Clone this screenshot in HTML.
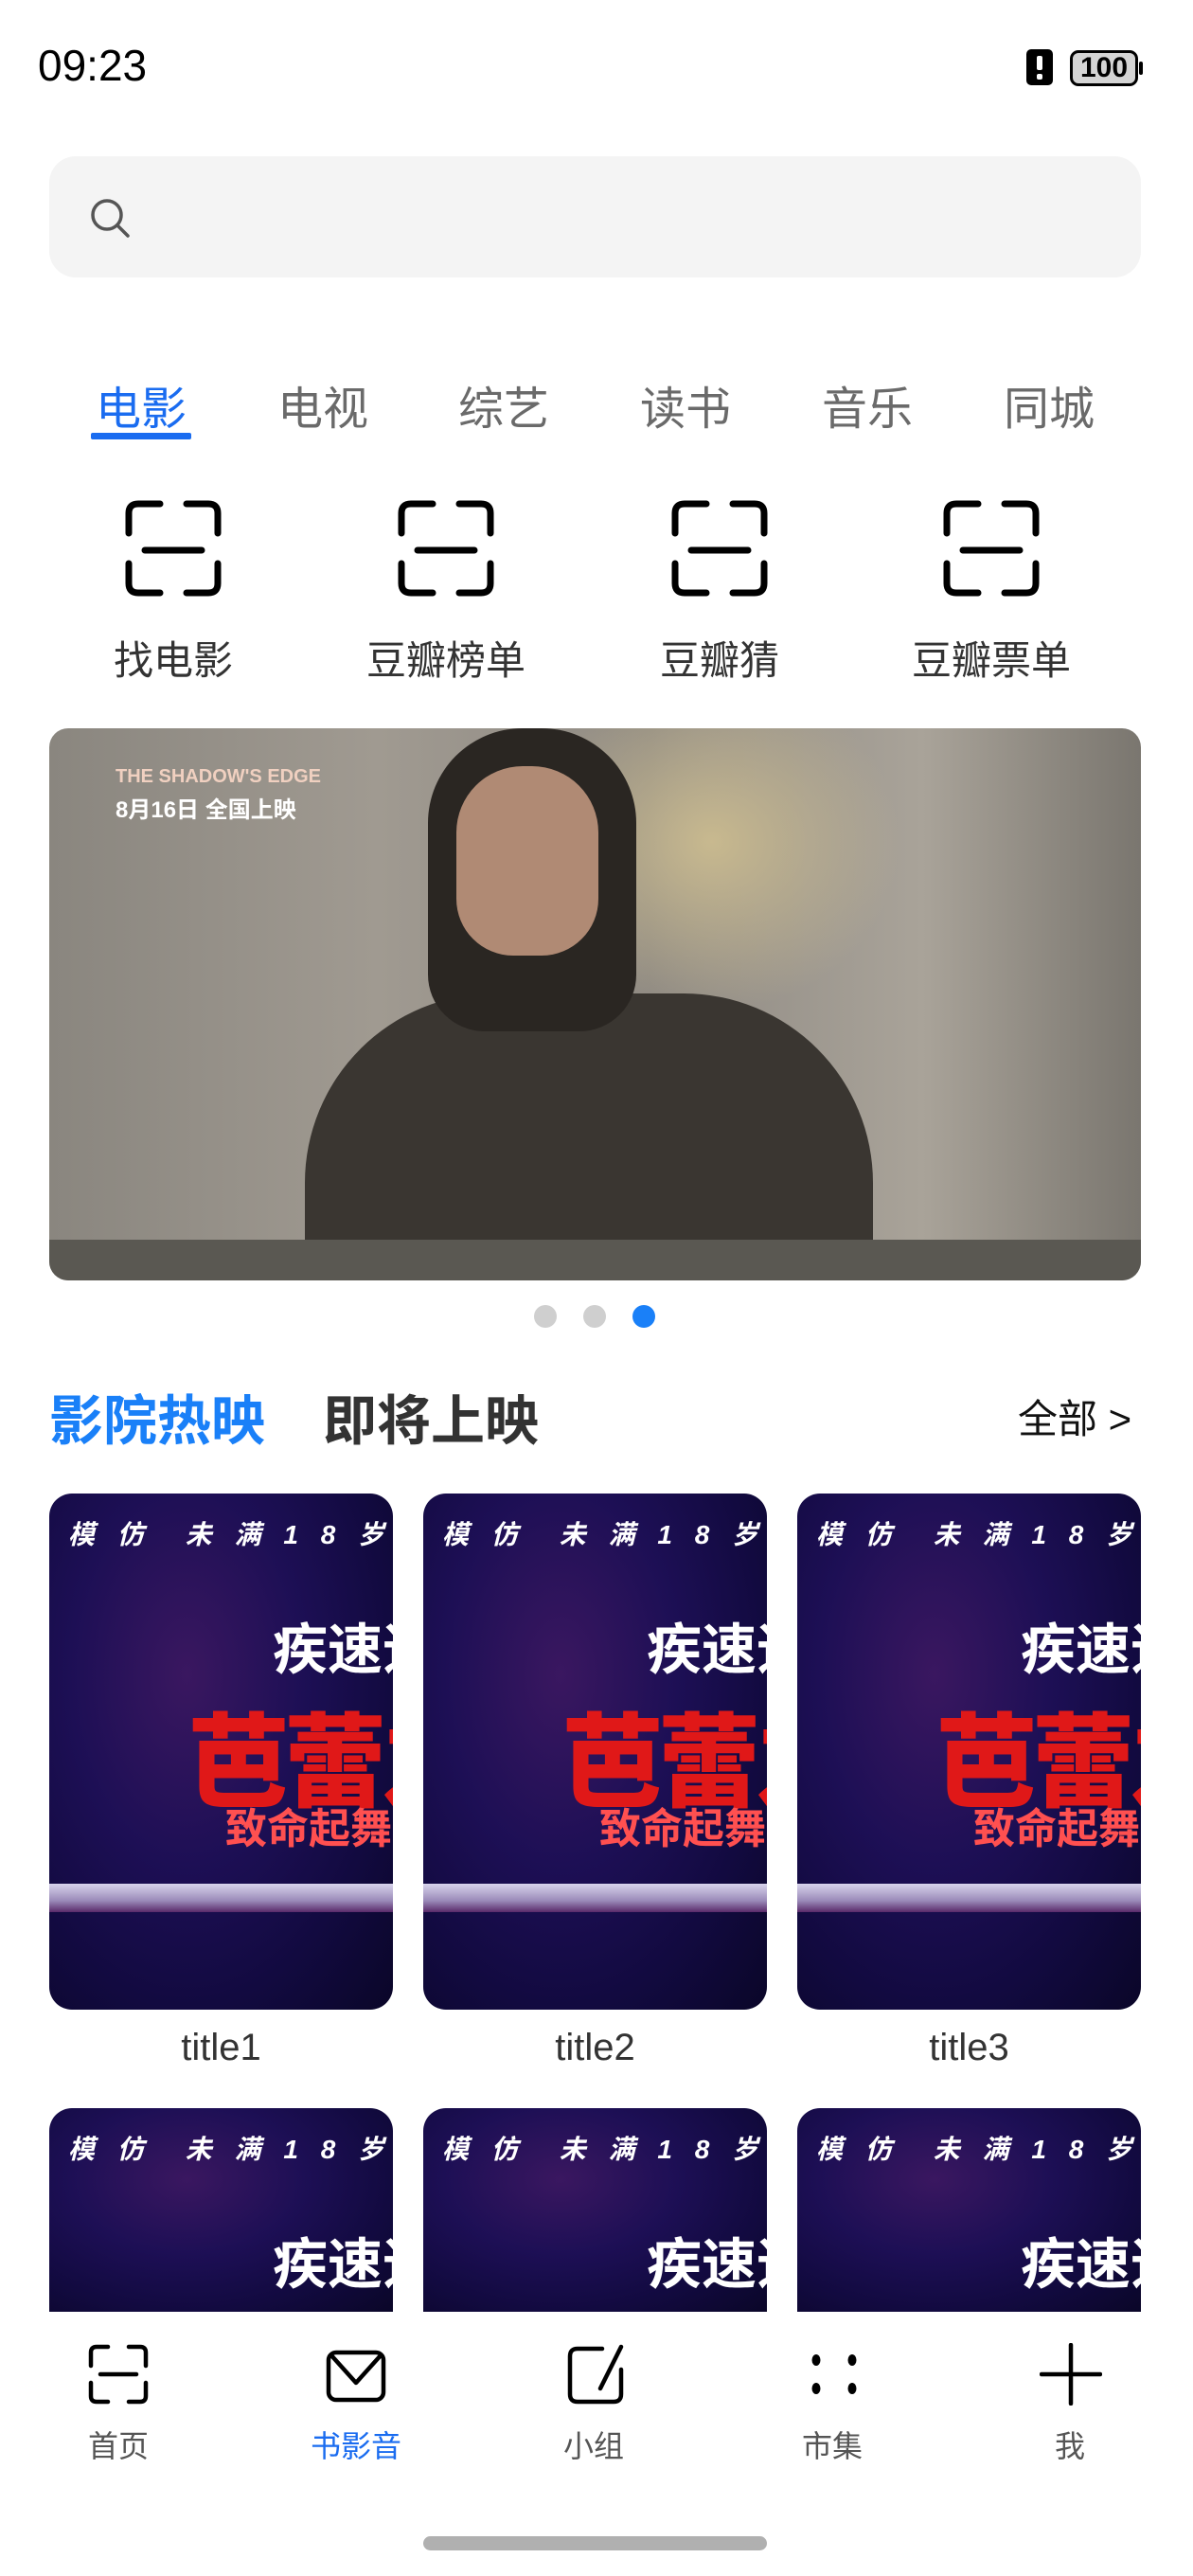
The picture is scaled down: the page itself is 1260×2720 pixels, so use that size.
<!DOCTYPE html>
<html style="overflow:hidden;height:2720px"><head><meta charset="utf-8">
<style>
*{margin:0;padding:0;box-sizing:border-box}
html,body{width:1260px;height:2720px;overflow:hidden}
body{background:#fff;position:relative;font-family:"Liberation Sans","Noto Sans CJK SC",sans-serif;color:#222}
.abs{position:absolute}
.time{left:40px;top:42px;font-size:46px;font-weight:500;color:#000}
.search{left:52px;top:165px;width:1153px;height:128px;background:#f4f4f4;border-radius:28px}
.tab{top:392px;font-size:48px;color:#6a6a6a;width:140px;text-align:center}
.ic{top:527px;width:104px;height:104px}
.lbl{top:664px;font-size:42px;color:#333;width:260px;text-align:center}
.banner{left:52px;top:769px;width:1153px;height:583px;border-radius:20px;overflow:hidden;background:linear-gradient(90deg,#8a867f 0%,#a09a91 30%,#8f8a83 55%,#a9a399 80%,#7a766f 100%)}
.dot{top:1378px;width:24px;height:24px;border-radius:50%;background:#cfcfcf}
.poster{width:363px;height:545px;border-radius:24px;overflow:hidden;background:radial-gradient(ellipse at 40% 35%,#3a1760 0%,#1d0f55 40%,#120a40 70%,#0a0628 100%)}
.poster .t1{position:absolute;left:20px;top:22px;color:#fff;font-weight:bold;font-style:italic;font-size:28px;letter-spacing:8px;white-space:nowrap}
.poster .t2{position:absolute;left:236px;top:118px;color:#fff;font-weight:bold;font-size:58px;white-space:nowrap}
.poster .t3{position:absolute;left:146px;top:198px;color:#e01818;font-weight:900;font-size:108px;white-space:nowrap;letter-spacing:-6px}
.poster .t4{position:absolute;left:186px;top:318px;color:#ff5050;font-weight:bold;font-size:44px;white-space:nowrap}
.poster .bar{position:absolute;left:0;top:412px;width:100%;height:30px;background:linear-gradient(180deg,#d8d4ec,#9a8ab8 60%,#5a2a6a)}
.short{height:215px;border-radius:24px 24px 0 0}
.ptitle{top:2140px;width:363px;text-align:center;font-size:40px;color:#333}
.nav{left:0;top:2441px;width:1260px;height:279px;background:#fff}
.nl{top:2558px;font-size:32px;color:#555;width:200px;text-align:center}
</style></head><body>
<div class="abs time">09:23</div>
<svg class="abs" style="left:1084px;top:52px" width="28" height="38" viewBox="0 0 28 38"><rect x="0" y="0" width="28" height="38" rx="5" fill="#000"/><rect x="11" y="7" width="6" height="15" rx="2" fill="#fff"/><rect x="11" y="26" width="6" height="6" rx="2" fill="#fff"/></svg>
<div class="abs" style="left:1130px;top:53px;width:72px;height:38px;border:3px solid #000;border-radius:9px;background:#d4d4d4;font-size:30px;font-weight:bold;line-height:32px;text-align:center;color:#000">100</div>
<div class="abs" style="left:1203px;top:65px;width:4px;height:14px;background:#000;border-radius:2px"></div>

<div class="abs search"></div>
<svg class="abs" style="left:92px;top:206px" width="48" height="48" viewBox="0 0 48 48"><circle cx="21" cy="21" r="15" fill="none" stroke="#555" stroke-width="3.5"/><line x1="32" y1="32" x2="43" y2="43" stroke="#555" stroke-width="3.5" stroke-linecap="round"/></svg>

<div class="abs tab" style="left:79px;color:#1a6cf0">电影</div>
<div class="abs" style="left:96px;top:457px;width:106px;height:7px;background:#1a6cf0;border-radius:2px"></div>
<div class="abs tab" style="left:271px">电视</div>
<div class="abs tab" style="left:462px">综艺</div>
<div class="abs tab" style="left:654px">读书</div>
<div class="abs tab" style="left:846px">音乐</div>
<div class="abs tab" style="left:1038px">同城</div>

<svg class="abs ic" style="left:131px" viewBox="0 0 104 104"><g fill="none" stroke="#000" stroke-width="7" stroke-linecap="round"><path d="M5 36V15Q5 5 15 5H38M66 5H89Q99 5 99 15V36M5 68V89Q5 99 15 99H38M66 99H89Q99 99 99 89V68M22 54H82"/></g></svg>
<svg class="abs ic" style="left:419px" viewBox="0 0 104 104"><g fill="none" stroke="#000" stroke-width="7" stroke-linecap="round"><path d="M5 36V15Q5 5 15 5H38M66 5H89Q99 5 99 15V36M5 68V89Q5 99 15 99H38M66 99H89Q99 99 99 89V68M22 54H82"/></g></svg>
<svg class="abs ic" style="left:708px" viewBox="0 0 104 104"><g fill="none" stroke="#000" stroke-width="7" stroke-linecap="round"><path d="M5 36V15Q5 5 15 5H38M66 5H89Q99 5 99 15V36M5 68V89Q5 99 15 99H38M66 99H89Q99 99 99 89V68M22 54H82"/></g></svg>
<svg class="abs ic" style="left:995px" viewBox="0 0 104 104"><g fill="none" stroke="#000" stroke-width="7" stroke-linecap="round"><path d="M5 36V15Q5 5 15 5H38M66 5H89Q99 5 99 15V36M5 68V89Q5 99 15 99H38M66 99H89Q99 99 99 89V68M22 54H82"/></g></svg>
<div class="abs lbl" style="left:53px">找电影</div>
<div class="abs lbl" style="left:341px">豆瓣榜单</div>
<div class="abs lbl" style="left:630px">豆瓣猜</div>
<div class="abs lbl" style="left:917px">豆瓣票单</div>

<div class="abs banner">
<div class="abs" style="left:500px;top:0;width:400px;height:300px;background:radial-gradient(ellipse at 50% 40%,#c8b98f 0%,rgba(180,170,140,0) 70%)"></div>
<div class="abs" style="left:270px;top:280px;width:600px;height:320px;background:#3a3631;border-radius:200px 200px 0 0"></div>
<div class="abs" style="left:400px;top:0;width:220px;height:320px;background:#2a2622;border-radius:100px 100px 60px 60px"></div>
<div class="abs" style="left:430px;top:40px;width:150px;height:200px;background:#b08a74;border-radius:70px 70px 60px 60px"></div>
<div class="abs" style="left:0;top:540px;width:1153px;height:43px;background:#5a5852"></div>
<div class="abs" style="left:70px;top:40px;color:#f0d0c0;font-size:20px;font-weight:bold">THE SHADOW'S EDGE</div>
<div class="abs" style="left:70px;top:66px;color:#fff;font-size:24px;font-weight:bold">8月16日 全国上映</div>
</div>
<div class="abs dot" style="left:564px"></div>
<div class="abs dot" style="left:616px"></div>
<div class="abs dot" style="left:668px;background:#1a80f8"></div>

<div class="abs" style="left:52px;top:1455px;font-size:57px;font-weight:bold;color:#1a80f8">影院热映</div>
<div class="abs" style="left:341px;top:1455px;font-size:57px;font-weight:bold;color:#333">即将上映</div>
<div class="abs" style="left:1075px;top:1465px;font-size:42px;color:#111">全部 &gt;</div>

<div class="abs poster" style="left:52px;top:1577px"><div class="t1">模 仿　未 满 1 8 岁</div><div class="t2">疾速追</div><div class="t3">芭蕾之</div><div class="t4">致命起舞</div><div class="bar"></div></div>
<div class="abs poster" style="left:447px;top:1577px"><div class="t1">模 仿　未 满 1 8 岁</div><div class="t2">疾速追</div><div class="t3">芭蕾之</div><div class="t4">致命起舞</div><div class="bar"></div></div>
<div class="abs poster" style="left:842px;top:1577px"><div class="t1">模 仿　未 满 1 8 岁</div><div class="t2">疾速追</div><div class="t3">芭蕾之</div><div class="t4">致命起舞</div><div class="bar"></div></div>
<div class="abs ptitle" style="left:52px">title1</div>
<div class="abs ptitle" style="left:447px">title2</div>
<div class="abs ptitle" style="left:842px">title3</div>

<div class="abs poster short" style="left:52px;top:2226px"><div class="t1">模 仿　未 满 1 8 岁</div><div class="t2">疾速追</div><div class="t3">芭蕾之</div></div>
<div class="abs poster short" style="left:447px;top:2226px"><div class="t1">模 仿　未 满 1 8 岁</div><div class="t2">疾速追</div><div class="t3">芭蕾之</div></div>
<div class="abs poster short" style="left:842px;top:2226px"><div class="t1">模 仿　未 满 1 8 岁</div><div class="t2">疾速追</div><div class="t3">芭蕾之</div></div>

<div class="abs nav"></div>
<svg class="abs" style="left:92px;top:2474px" width="66" height="66" viewBox="0 0 66 66"><g fill="none" stroke="#000" stroke-width="4.5" stroke-linecap="round"><path d="M4 24V10Q4 4 10 4H22M44 4H56Q62 4 62 10V24M4 42V56Q4 62 10 62H22M44 62H56Q62 62 62 56V42M14 33H52"/></g></svg>
<svg class="abs" style="left:343px;top:2474px" width="66" height="66" viewBox="0 0 66 66"><g fill="none" stroke="#000" stroke-width="4.5" stroke-linejoin="round"><rect x="4" y="10" width="58" height="50" rx="8"/><path d="M6 12L33 42L60 12"/></g></svg>
<svg class="abs" style="left:596px;top:2474px" width="66" height="66" viewBox="0 0 66 66"><g fill="none" stroke="#000" stroke-width="4.5" stroke-linecap="round"><path d="M40 6H14Q6 6 6 14V54Q6 62 14 62H52Q60 62 60 54V28"/><path d="M60 4L38 48"/></g></svg>
<svg class="abs" style="left:848px;top:2474px" width="66" height="66" viewBox="0 0 66 66"><g fill="#000"><ellipse cx="14" cy="18" rx="4.5" ry="6"/><ellipse cx="52" cy="18" rx="4.5" ry="6"/><ellipse cx="14" cy="48" rx="4.5" ry="6"/><ellipse cx="52" cy="48" rx="4.5" ry="6"/></g></svg>
<svg class="abs" style="left:1098px;top:2474px" width="66" height="66" viewBox="0 0 66 66"><g stroke="#000" stroke-width="4.5" stroke-linecap="round"><path d="M33 2V64M2 33H64"/></g></svg>
<div class="abs nl" style="left:25px">首页</div>
<div class="abs nl" style="left:276px;color:#1a6cf0">书影音</div>
<div class="abs nl" style="left:527px">小组</div>
<div class="abs nl" style="left:779px">市集</div>
<div class="abs nl" style="left:1030px">我</div>
<div class="abs" style="left:447px;top:2678px;width:363px;height:15px;border-radius:8px;background:#b0b0b0"></div>
</body></html>
